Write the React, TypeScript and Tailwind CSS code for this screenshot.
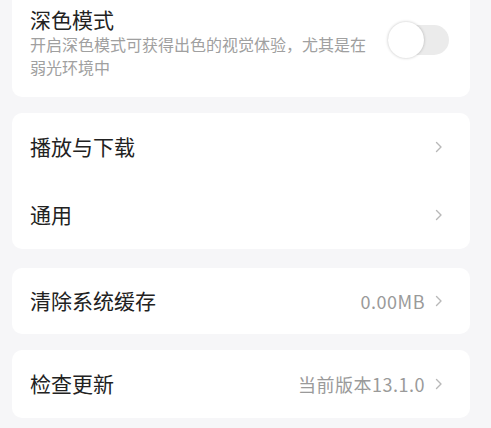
import { ReactNode } from "react";

const font = { fontFamily: '"Noto Sans CJK SC", "Noto Sans", sans-serif' };

function Chevron() {
  return (
    <svg width="8" height="12" viewBox="0 0 8 12" className="ml-[10px] shrink-0">
      <path d="M1.5 1.5 L6 6 L1.5 10.5" fill="none" stroke="#b8b8b8" strokeWidth="1.4" strokeLinecap="round" strokeLinejoin="round" />
    </svg>
  );
}

function Row({ title, value, h = "h-[68px]" }: { title: string; value?: string; h?: string }) {
  return (
    <div className={`flex items-center justify-between ${h} pl-[18px] pr-[27px]`}>
      <span className="text-[21px] text-[#222]">{title}</span>
      <div className="flex items-center">
        {value && <span className="text-[18px] tracking-[0.5px] text-[#9a9a9a]">{value}</span>}
        <Chevron />
      </div>
    </div>
  );
}

function Card({ children, className = "" }: { children: ReactNode; className?: string }) {
  return <div className={`bg-white rounded-[10px] ${className}`}>{children}</div>;
}

export default function App() {
  return (
    <div className="w-[491px] h-[428px] overflow-hidden bg-[#f6f6f8]" style={font}>
      <div className="w-[458px] ml-[12px] flex flex-col">
        <Card className="rounded-t-none -mt-[10px] pt-[14px] pb-[18px] pl-[18px] pr-[21px] flex items-start justify-between">
          <div className="w-[345px]">
            <div className="text-[21px] leading-[30px] text-[#222]">深色模式</div>
            <div className="-mt-[1px] text-[16px] leading-[23px] text-[#a0a0a0]">
              开启深色模式可获得出色的视觉体验，尤其是在弱光环境中
            </div>
          </div>
          <div className="relative w-[61px] h-[30px] rounded-full bg-[#ebebeb] mt-[21px]">
            <div className="absolute left-0 top-[-3px] w-[36px] h-[36px] rounded-full bg-white shadow-[0_0_3px_rgba(0,0,0,0.25)]" />
          </div>
        </Card>
        <Card className="mt-[16px]">
          <Row title="播放与下载" />
          <Row title="通用" />
        </Card>
        <Card className="mt-[19px]">
          <Row title="清除系统缓存" value="0.00MB" h="h-[66px]" />
        </Card>
        <Card className="mt-[16px]">
          <Row title="检查更新" value="当前版本13.1.0" />
        </Card>
      </div>
    </div>
  );
}
